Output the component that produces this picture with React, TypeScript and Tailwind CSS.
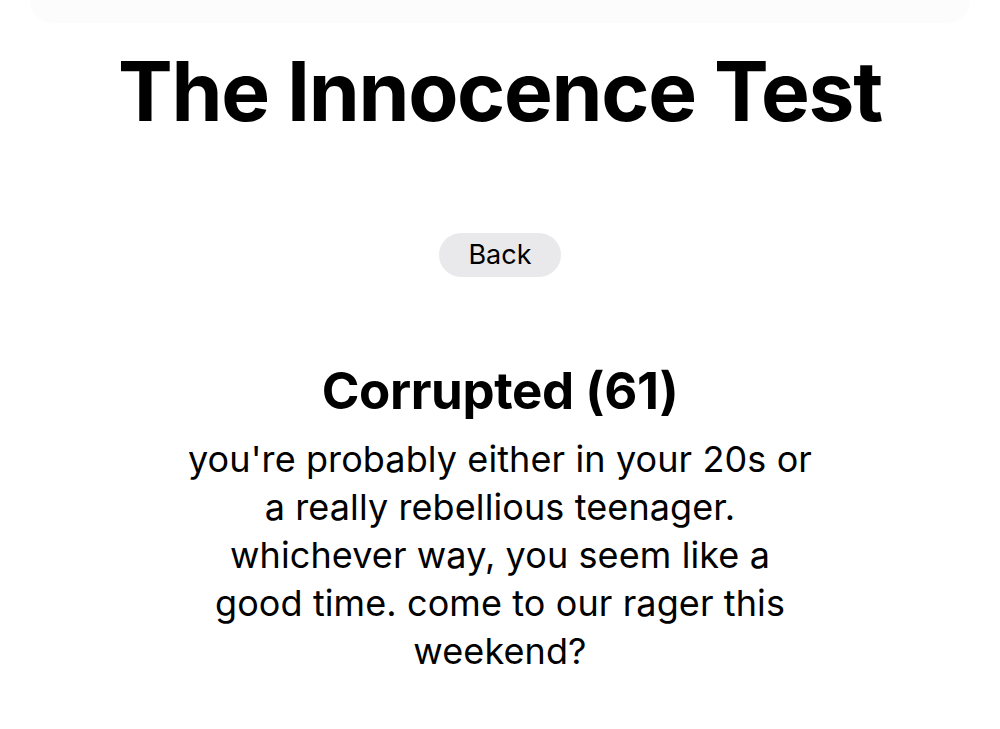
import React from "react";

export default function App() {
  return (
    <div
      className="min-h-[729px] w-full bg-white text-black flex flex-col items-center"
      style={{ fontFamily: 'Inter, "Noto Sans", sans-serif' }}
    >
      <div className="h-[23px] w-[940px] rounded-b-[40px] bg-[#fcfcfc]" />
      <h1 className="mt-[28px] text-[82px] leading-[82px] font-bold tracking-[-1.3px]">
        The Innocence Test
      </h1>
      <button className="mt-[100px] h-[44px] w-[122px] rounded-full bg-[#e9e9eb] text-[27px] leading-[44px] text-black">
        Back
      </button>
      <h2 className="mt-[89px] text-[51px] leading-[50px] font-bold tracking-[-0.4px]">
        Corrupted (61)
      </h2>
      <p className="mt-[19px] text-center text-[36px] leading-[48px] tracking-[0.1px]">
        you're probably either in your 20s or
        <br />
        a really rebellious teenager.
        <br />
        whichever way, you seem like a
        <br />
        good time. come to our rager this
        <br />
        weekend?
      </p>
    </div>
  );
}
